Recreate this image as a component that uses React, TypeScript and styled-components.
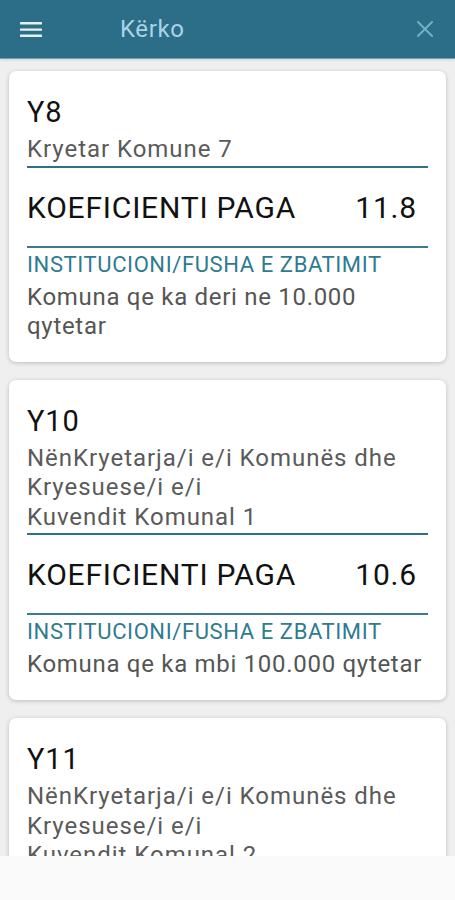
import React from "react";
import styled, { createGlobalStyle } from "styled-components";

const GlobalStyle = createGlobalStyle`
  html, body {
    margin: 0;
    padding: 0;
    background: #fafafa;
    font-family: Roboto, "Noto Sans", "Liberation Sans", sans-serif;
  }
  * { box-sizing: border-box; }
`;

const Screen = styled.div`
  height: 900px;
  width: 455px;
  display: flex;
  flex-direction: column;
  overflow: hidden;
`;

const Header = styled.header`
  height: 58px;
  flex: 0 0 58px;
  background: #2c6e88;
  display: flex;
  align-items: center;
  padding: 0 22px 0 20px;
  position: relative;
  z-index: 1;
  box-shadow: 0 1px 0 #6fa3b6, 0 2px 3px rgba(0, 0, 0, 0.12);
`;

const IconButton = styled.button`
  border: 0;
  background: transparent;
  padding: 0;
  display: flex;
  align-items: center;
  justify-content: center;
  cursor: pointer;
`;

const Title = styled.h1`
  margin: 0 0 0 78px;
  flex: 1;
  font-size: 24px;
  font-weight: 400;
  letter-spacing: 0.6px;
  color: #a7d3e6;
  line-height: 30px;
`;

const List = styled.main`
  flex: 1;
  overflow: hidden;
  background: #efefef;
  padding: 13px 9px;
  display: flex;
  flex-direction: column;
  gap: 18px;
`;

const Footer = styled.div`
  flex: 0 0 44px;
  background: #fafafa;
`;

const Card = styled.article`
  flex: 0 0 auto;
  background: #ffffff;
  border-radius: 7px;
  box-shadow: 0 1px 4px rgba(0, 0, 0, 0.22);
  padding: 24px 18px 21px;
`;

const Code = styled.div`
  font-size: 29px;
  line-height: 34px;
  letter-spacing: 0.9px;
  color: #111;
`;

const Name = styled.div`
  margin-top: 6px;
  padding-bottom: 1px;
  border-bottom: 2px solid #2f7087;
  font-size: 24px;
  line-height: 29.5px;
  letter-spacing: 0.96px;
  color: #5a5a5a;
  white-space: pre-line;
`;

const CoefRow = styled.div`
  display: flex;
  justify-content: space-between;
  align-items: baseline;
  padding: 22px 11px 20px 0;
  border-bottom: 2px solid #3b7a90;
  font-size: 30px;
  line-height: 36px;
  letter-spacing: 0.8px;
  color: #111;
`;

const FieldLabel = styled.div`
  margin-top: 4px;
  font-size: 22px;
  line-height: 26px;
  letter-spacing: 0.6px;
  color: #2f7b90;
`;

const FieldValue = styled.div`
  margin-top: 5px;
  font-size: 24px;
  line-height: 29px;
  letter-spacing: 0.7px;
  color: #555555;
`;

type Item = {
  code: string;
  name: string;
  coef: string;
  field: string;
};

const items: Item[] = [
  {
    code: "Y8",
    name: "Kryetar Komune 7",
    coef: "11.8",
    field: "Komuna qe ka deri ne 10.000 qytetar",
  },
  {
    code: "Y10",
    name: "NënKryetarja/i e/i Komunës dhe Kryesuese/i e/i\nKuvendit Komunal 1",
    coef: "10.6",
    field: "Komuna qe ka mbi 100.000 qytetar",
  },
  {
    code: "Y11",
    name: "NënKryetarja/i e/i Komunës dhe Kryesuese/i e/i\nKuvendit Komunal 2",
    coef: "10.3",
    field: "Komuna qe ka prej 50.000 deri ne 100.000 qytetar",
  },
];

const MenuIcon = () => (
  <svg width="22" height="16" viewBox="0 0 22 16" aria-hidden="true">
    <rect x="0" y="1" width="22" height="2.4" rx="0.6" fill="#e4f1f6" />
    <rect x="0" y="7.4" width="22" height="2.4" rx="0.6" fill="#e4f1f6" />
    <rect x="0" y="13.6" width="22" height="2.4" rx="0.6" fill="#e4f1f6" />
  </svg>
);

const CloseIcon = () => (
  <svg width="16" height="16" viewBox="0 0 16 16" aria-hidden="true">
    <path d="M1 1 L15 15 M15 1 L1 15" stroke="#74b2c8" strokeWidth="1.9" strokeLinecap="round" />
  </svg>
);

export default function App() {
  return (
    <>
      <GlobalStyle />
      <Screen>
        <Header>
          <IconButton aria-label="menu">
            <MenuIcon />
          </IconButton>
          <Title>Kërko</Title>
          <IconButton aria-label="close">
            <CloseIcon />
          </IconButton>
        </Header>
        <List>
          {items.map((it) => (
            <Card key={it.code}>
              <Code>{it.code}</Code>
              <Name>{it.name}</Name>
              <CoefRow>
                <span>KOEFICIENTI PAGA</span>
                <span>{it.coef}</span>
              </CoefRow>
              <FieldLabel>INSTITUCIONI/FUSHA E ZBATIMIT</FieldLabel>
              <FieldValue>{it.field}</FieldValue>
            </Card>
          ))}
        </List>
        <Footer />
      </Screen>
    </>
  );
}
